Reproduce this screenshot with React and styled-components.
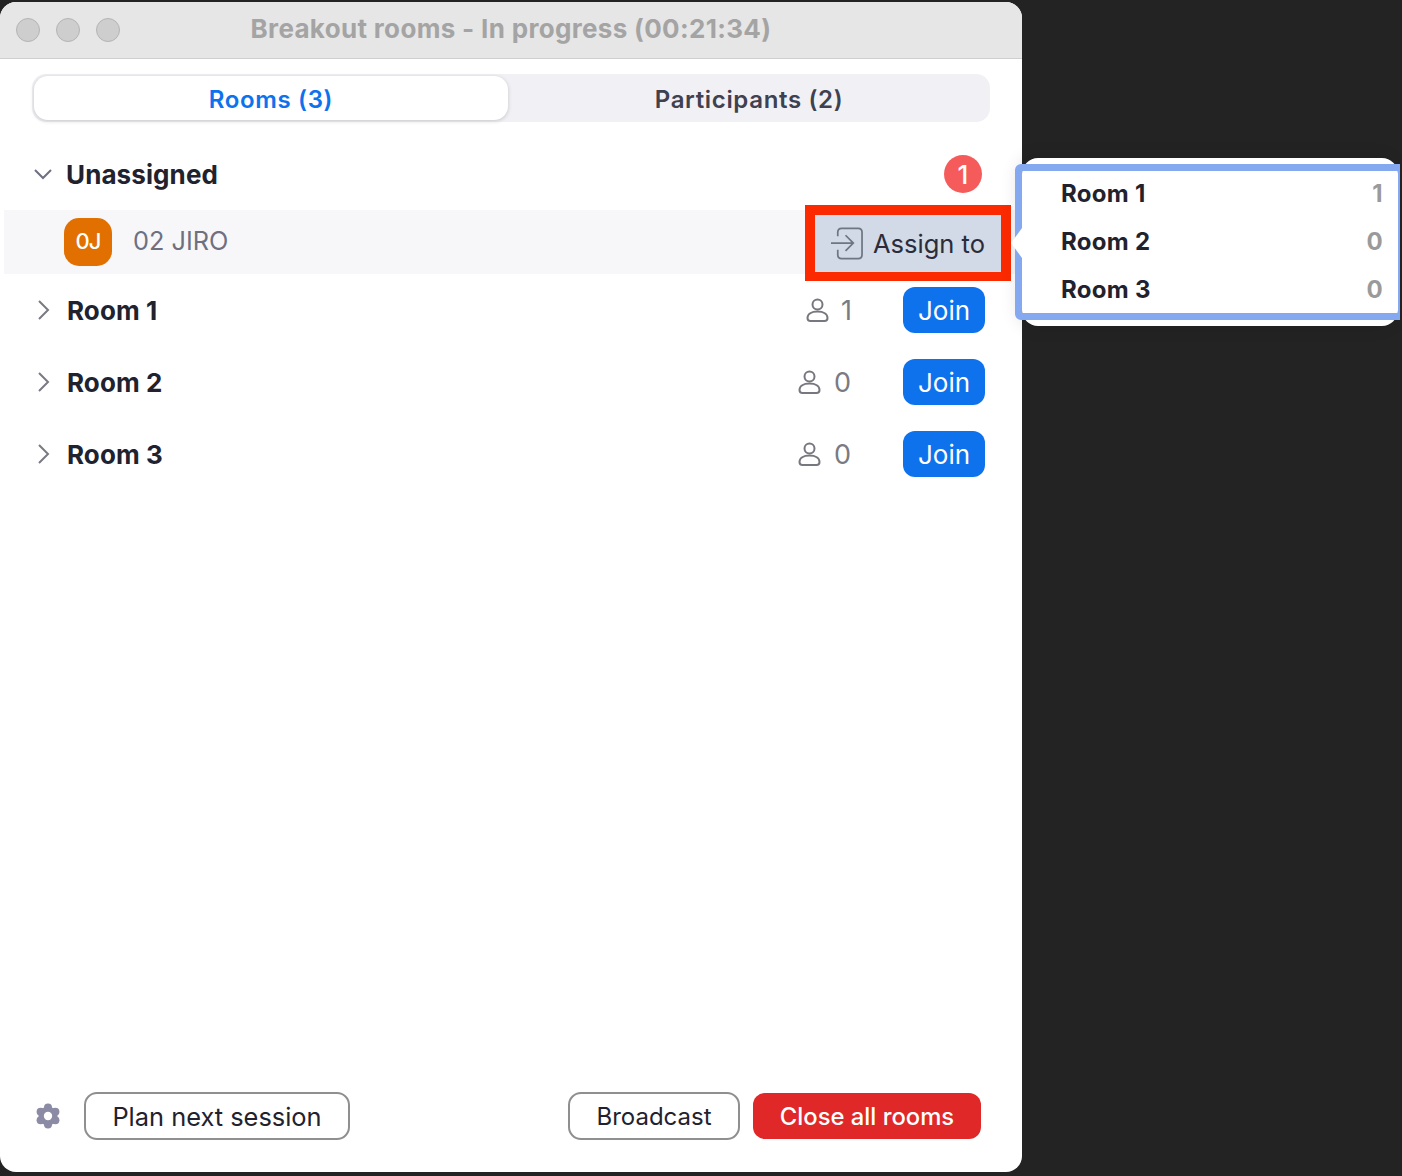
import styled, { createGlobalStyle } from "styled-components";

const GlobalStyle = createGlobalStyle`
  html, body {
    margin: 0;
    padding: 0;
    background: #232323;
    font-family: Inter, "Liberation Sans", sans-serif;
  }
  * { box-sizing: border-box; }
`;

const Page = styled.div`
  position: relative;
  width: 1402px;
  height: 1176px;
  padding-top: 2px;
  overflow: hidden;
  background: #232323;
`;

const Window = styled.div`
  display: flex;
  flex-direction: column;
  width: 1022px;
  height: 1170px;
  background: #fff;
  border-radius: 16px;
  overflow: hidden;
`;

const TitleBar = styled.div`
  position: relative;
  display: flex;
  align-items: center;
  justify-content: center;
  flex: none;
  height: 57px;
  padding-bottom: 4px;
  background: #e6e6e6;
  border-bottom: 1px solid #cfcfcf;
`;

const Lights = styled.div`
  position: absolute;
  left: 16px;
  top: 16px;
  display: flex;
  gap: 16px;
`;

const Light = styled.span`
  width: 24px;
  height: 24px;
  border-radius: 50%;
  background: #cecece;
  border: 1px solid #b4b4b4;
`;

const Title = styled.div`
  font-size: 26px;
  font-weight: 700;
  letter-spacing: 0.33px;
  color: #a4a4a4;
`;

const Tabs = styled.div`
  display: flex;
  flex: none;
  height: 48px;
  margin: 15px 32px 0;
  padding: 2px;
  background: #f1f1f5;
  border-radius: 14px;
`;

const Tab = styled.div`
  display: flex;
  align-items: center;
  justify-content: center;
  flex: ${({ $active }) => ($active ? "0 0 474px" : "1")};
  padding: ${({ $active }) => ($active ? "2px 0 0" : "2px 0 0 2px")};
  font-size: 24px;
  font-weight: 600;
  letter-spacing: 0.65px;
  color: ${({ $active }) => ($active ? "#0e72ed" : "#3f4150")};
  background: ${({ $active }) => ($active ? "#fff" : "transparent")};
  border-radius: 14px;
  box-shadow: ${({ $active }) => ($active ? "0 1px 4px rgba(0,0,0,.18)" : "none")};
`;

const List = styled.div`
  display: flex;
  flex-direction: column;
  padding-top: 20px;
`;

const SectionHeader = styled.div`
  display: flex;
  align-items: center;
  height: 64px;
  padding: 0 40px 0 34px;
`;

const Name = styled.div`
  margin-left: ${({ $indent }) => $indent}px;
  font-size: 26px;
  font-weight: 700;
  letter-spacing: 0.1px;
  color: #22222e;
`;

const Badge = styled.div`
  display: flex;
  align-items: center;
  justify-content: center;
  width: 38px;
  height: 38px;
  margin-left: auto;
  border-radius: 50%;
  background: #f65b5b;
  color: #fff;
  font-size: 26px;
  font-weight: 500;
`;

const MemberRow = styled.div`
  display: flex;
  align-items: center;
  height: 64px;
  margin: 4px 0 0 4px;
  padding-left: 60px;
  background: #f7f7fa;
`;

const Avatar = styled.div`
  display: flex;
  align-items: center;
  justify-content: center;
  width: 48px;
  height: 48px;
  padding-bottom: 3px;
  border-radius: 15px;
  background: #e17000;
  color: #fff;
  font-size: 22px;
  font-weight: 500;
  letter-spacing: -1px;
`;

const MemberName = styled.div`
  margin-left: 21px;
  padding-bottom: 3px;
  font-size: 25.300px;
  color: #6e7080;
`;

const AssignBox = styled.div`
  display: flex;
  align-items: center;
  flex: none;
  width: 206px;
  height: 76px;
  margin: 2px 11px 0 auto;
  padding: 0 0 1px 15px;
  gap: 10px;
  background: #d1dae6;
  border: 10px solid #fb2a00;
  border-bottom-width: 9px;
  font-size: 25.500px;
  color: #2a2c3a;
`;

const RoomRow = styled.div`
  display: flex;
  align-items: center;
  height: 72px;
  padding: 0 37px;
`;

const Count = styled.div`
  display: flex;
  align-items: center;
  gap: ${({ $gap }) => $gap}px;
  margin-left: auto;
  margin-right: ${({ $right }) => $right}px;
  font-size: 27px;
  color: #7a7a82;
`;

const JoinButton = styled.div`
  display: flex;
  align-items: center;
  justify-content: center;
  width: 82px;
  height: 46px;
  border-radius: 12px;
  background: #0e72ed;
  color: #fff;
  font-size: 26px;
`;

const Footer = styled.div`
  display: flex;
  align-items: center;
  margin-top: auto;
  height: 48px;
  margin-bottom: 32px;
  padding: 0 41px 0 35px;
`;

const OutlineButton = styled.div`
  display: flex;
  align-items: center;
  justify-content: center;
  width: ${({ $width }) => $width}px;
  height: 48px;
  margin-left: ${({ $left }) => $left};
  border: 2px solid #8f8f8f;
  border-radius: 13px;
  font-size: ${({ $size }) => $size}px;
  color: #22222e;
`;

const CloseButton = styled.div`
  display: flex;
  align-items: center;
  justify-content: center;
  width: 228px;
  height: 46px;
  margin-left: 13px;
  border-radius: 12px;
  background: #e02828;
  color: #fff;
  font-size: 23.800px;
  font-weight: 500;
`;

const Popover = styled.div`
  position: absolute;
  left: 1022px;
  top: 158px;
  width: 376px;
  height: 168px;
  background: #fff;
  border-radius: 16px;
  box-shadow: -4px 0 18px rgba(0, 0, 0, 0.12);
`;

const Frame = styled.div`
  position: absolute;
  left: -7px;
  top: 6px;
  width: 385px;
  height: 156px;
  border: 7px solid #84a9f0;
  border-right-width: 2px;
  border-radius: 6px 0 0 6px;
`;

const Notch = styled.div`
  position: absolute;
  left: -11px;
  top: 57px;
  width: 11px;
  height: 30px;
  background: #fff;
  clip-path: polygon(0 50%, 100% 0, 100% 100%);
`;

const MenuRow = styled.div`
  display: flex;
  align-items: center;
  justify-content: space-between;
  height: 48px;
  padding: 0 15px 0 39px;
  font-size: 24px;
  font-weight: 700;
  letter-spacing: 0.3px;
  color: #22222e;
  &:nth-child(2) { margin-top: -2px; }
`;

const MenuCount = styled.span`
  color: #9a9a9a;
`;

const ChevronDown = () => (
  <svg width="18" height="12" viewBox="0 0 18 12" fill="none" stroke="#6e7080" strokeWidth="2">
    <path d="M1 2l8 8 8-8" />
  </svg>
);

const ChevronRight = () => (
  <svg width="13" height="20" viewBox="0 0 13 20" fill="none" stroke="#7a7a85" strokeWidth="2">
    <path d="M2 1l9 9-9 9" />
  </svg>
);

const PersonIcon = () => (
  <svg width="23" height="24" viewBox="0 0 23 24" fill="none" stroke="#77777f" strokeWidth="2">
    <circle cx="11.500" cy="6.500" r="5" />
    <path d="M1.500 20c0-4 4-6.500 10-6.500s10 2.500 10 6.500c0 2-1 3-3 3h-14c-2 0-3-1-3-3z" />
  </svg>
);

const AssignIcon = () => (
  <svg width="33" height="33" viewBox="0 0 34 33" fill="none" stroke="#6f7683" strokeWidth="1.800">
    <path d="M8 9V5q0-4 4-4h17q4 0 4 4v23q0 4-4 4H12q-4 0-4-4v-5" />
    <path d="M1 16h23M16 8l8 8-8 8" />
  </svg>
);

const GearIcon = () => (
  <svg width="26" height="26" viewBox="0 0 26 26" fill="#8b8ba5">
    <circle cx="13" cy="13" r="9.500" />
    <circle cx="13" cy="4.500" r="4" />
    <circle cx="13" cy="21.500" r="4" />
    <circle cx="5.600" cy="8.700" r="4" />
    <circle cx="20.400" cy="8.700" r="4" />
    <circle cx="5.600" cy="17.300" r="4" />
    <circle cx="20.400" cy="17.300" r="4" />
    <circle cx="13" cy="13" r="4.200" fill="#fff" />
  </svg>
);

const rooms = [
  { name: "Room 1", count: 1, gap: 12, right: 51 },
  { name: "Room 2", count: 0, gap: 13, right: 52 },
  { name: "Room 3", count: 0, gap: 13, right: 52 },
];

export default function App() {
  return (
    <Page>
      <GlobalStyle />
      <Window>
        <TitleBar>
          <Lights>
            <Light />
            <Light />
            <Light />
          </Lights>
          <Title>Breakout rooms - In progress (00:21:34)</Title>
        </TitleBar>
        <Tabs>
          <Tab $active>Rooms (3)</Tab>
          <Tab>Participants (2)</Tab>
        </Tabs>
        <List>
          <SectionHeader>
            <ChevronDown />
            <Name $indent={14}>Unassigned</Name>
            <Badge>1</Badge>
          </SectionHeader>
          <MemberRow>
            <Avatar>0J</Avatar>
            <MemberName>02 JIRO</MemberName>
            <AssignBox>
              <AssignIcon />
              Assign to
            </AssignBox>
          </MemberRow>
          {rooms.map((room) => (
            <RoomRow key={room.name}>
              <ChevronRight />
              <Name $indent={17}>{room.name}</Name>
              <Count $gap={room.gap} $right={room.right}>
                <PersonIcon />
                {room.count}
              </Count>
              <JoinButton>Join</JoinButton>
            </RoomRow>
          ))}
        </List>
        <Footer>
          <GearIcon />
          <OutlineButton $width={266} $left="23px" $size={25.400}>Plan next session</OutlineButton>
          <OutlineButton $width={172} $left="auto" $size={24}>Broadcast</OutlineButton>
          <CloseButton>Close all rooms</CloseButton>
        </Footer>
      </Window>
      <Popover>
        <Frame>
          <Notch />
          {rooms.map((room) => (
            <MenuRow key={room.name}>
              {room.name}
              <MenuCount>{room.count}</MenuCount>
            </MenuRow>
          ))}
        </Frame>
      </Popover>
    </Page>
  );
}
